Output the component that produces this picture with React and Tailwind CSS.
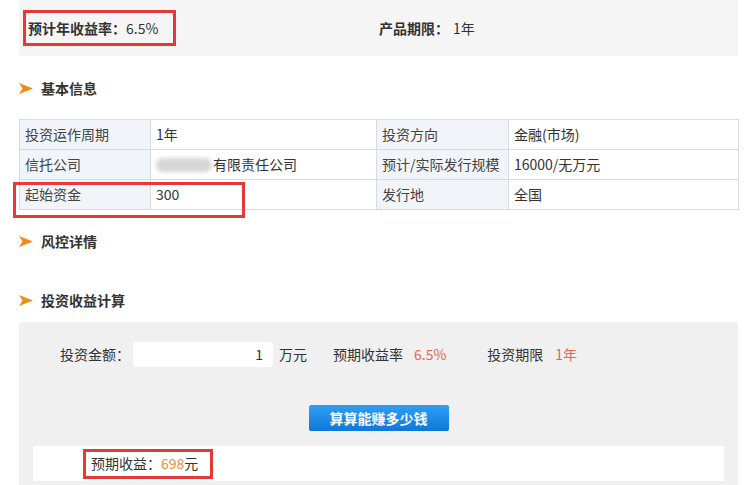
import React from "react";

const FONT = { fontFamily: '"Noto Sans CJK SC", "Noto Sans", sans-serif' };

function Arrow() {
  return (
    <svg width="14" height="11" viewBox="0 0 14 11" className="shrink-0">
      <polygon points="0,0 14,5.5 0,11 3.5,5.5" fill="#f08c1a" />
    </svg>
  );
}

function Heading({ children, className = "" }) {
  return (
    <div className={`flex items-center h-[20px] ${className}`}>
      <Arrow />
      <span className="ml-[8px] font-bold text-[14px] text-[#333]">{children}</span>
    </div>
  );
}

const rows = [
  ["投资运作周期", "1年", "投资方向", "金融(市场)"],
  ["信托公司", null, "预计/实际发行规模", "16000/无万元"],
  ["起始资金", "300", "发行地", "全国"],
];

export default function App() {
  return (
    <div className="w-[752px] h-[485px] overflow-hidden bg-white text-[14px] text-[#333]" style={FONT}>
      <div className="ml-[19px] w-[719px]">
        {/* top summary band */}
        <div className="h-[56px] bg-[#f5f5f5] flex items-center pl-[4px]">
          <div className="w-[356px]">
            <div className="w-[153px] h-[36px] border-[3px] border-[#e53935] flex items-center pl-[2px]">
              <span className="font-bold">预计年收益率：</span>
              <span>6.5%</span>
            </div>
          </div>
          <span className="font-bold">产品期限：</span>
          <span className="ml-[4px]">1年</span>
        </div>

        <Heading className="mt-[22px]">基本信息</Heading>

        {/* basic info table */}
        <div className="relative mt-[21px]">
          <table className="w-[719px] border-collapse table-fixed">
            <colgroup>
              <col className="w-[131px]" />
              <col className="w-[226px]" />
              <col className="w-[132px]" />
              <col className="w-[230px]" />
            </colgroup>
            <tbody>
              {rows.map((r, i) => (
                <tr key={i} className="h-[30px]">
                  <td className="border border-[#d5dbe3] bg-[#f1f5fa] pl-[5px] text-[#444]">{r[0]}</td>
                  <td className="border border-[#d5dbe3] pl-[5px]">
                    {r[1] !== null ? (
                      r[1]
                    ) : (
                      <div className="flex items-center">
                        <div className="w-[56px] h-[14px] rounded-full bg-[#d6d6d6] blur-[2px]" />
                        <span className="ml-[1px]">有限责任公司</span>
                      </div>
                    )}
                  </td>
                  <td className="border border-[#d5dbe3] bg-[#f1f5fa] pl-[5px] text-[#444]">{r[2]}</td>
                  <td className="border border-[#d5dbe3] pl-[5px]">{r[3]}</td>
                </tr>
              ))}
            </tbody>
          </table>
          {/* annotation */}
          <div className="absolute left-[-6px] top-[63px] w-[232px] h-[36px] border-[3px] border-[#e53935]" />
        </div>

        <Heading className="mt-[21px]">风控详情</Heading>
        <Heading className="mt-[39px]">投资收益计算</Heading>

        {/* calculator */}
        <div className="mt-[12px] bg-[#f0f0f0] pt-[20px] pb-[10px]">
          <div className="flex items-center pl-[41px] h-[25px]">
            <span>投资金额：</span>
            <div className="ml-[3px] w-[140px] h-[25px] bg-white rounded-[3px] flex items-center justify-end pr-[10px]">1</div>
            <span className="ml-[6px]">万元</span>
            <span className="ml-[26px]">预期收益率</span>
            <span className="ml-[11px] text-[#e8664d]">6.5%</span>
            <span className="ml-[41px]">投资期限</span>
            <span className="ml-[12px] text-[#e8664d]">1年</span>
          </div>
          <div className="flex justify-center mt-[38px]">
            <button className="w-[140px] h-[26px] rounded-[2px] bg-gradient-to-b from-[#2f9ff5] to-[#0b78db] text-white font-bold text-[14px]">
              算算能赚多少钱
            </button>
          </div>
          <div className="mx-[14px] mt-[15px] h-[35px] bg-white flex items-center pl-[50px]">
            <div className="w-[130px] h-[30px] border-[3px] border-[#e53935] flex items-center pl-[5px]">
              <span>预期收益：</span>
              <span className="text-[#f08a3c]">698</span>
              <span>元</span>
            </div>
          </div>
        </div>
      </div>
    </div>
  );
}
